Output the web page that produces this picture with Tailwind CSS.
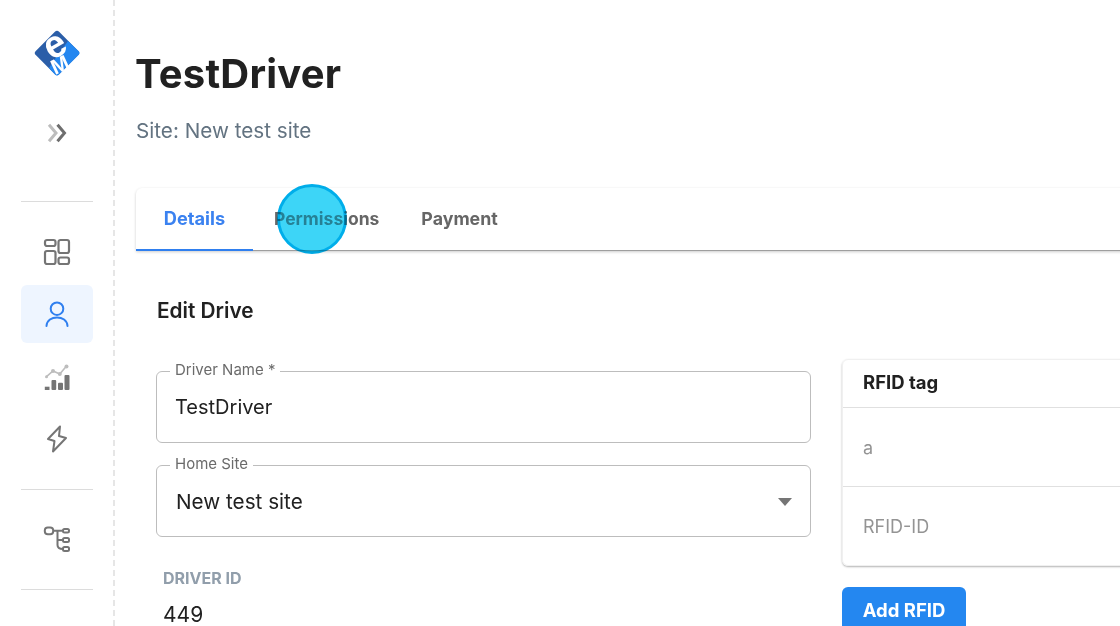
<!DOCTYPE html>
<html lang="en">
<head>
    <meta charset="utf-8">
    <title>TestDriver</title>
    <script src="https://cdn.jsdelivr.net/npm/@tailwindcss/browser@4"></script>
</head>
<body class="bg-white font-['Inter',sans-serif] text-[#212121] overflow-hidden">
<div class="relative flex w-[1120px] h-[626px] overflow-hidden">

    <!-- sidebar -->
    <aside class="w-[115px] h-full shrink-0 border-r-2 border-dashed border-[#e6e6e6] flex flex-col items-center">
        <svg class="mt-[30px] w-[46px] h-[46px] overflow-visible" viewBox="0 0 46 46">
            <rect x="6.500" y="6.500" width="33" height="33" rx="3" transform="rotate(45 23 23)" fill="#2b5ea8"/>
            <path d="M34 11 L44.500 21 Q46.500 23 44.500 25 L25 44.500 Q23 46.500 21 44.500 L15 38 L23 26Z" fill="#2487f0"/>
            <text x="10.500" y="27" transform="rotate(-30 21 16)" font-family="'Liberation Sans',sans-serif" font-size="38" font-weight="700" fill="#fff">e</text>
            <text x="17" y="41.500" transform="rotate(-25 27 34)" font-family="'Liberation Sans',sans-serif" font-size="21" font-weight="700" fill="#fff">M</text>
        </svg>
        <svg class="mt-[45px] w-[24px] h-[24px]" viewBox="0 0 24 24" fill="none" stroke-width="3">
            <path d="M4 3.800 L11 12 L4 20.200" stroke="#bdbdbd"/>
            <path d="M12.500 3.800 L19.500 12 L12.500 20.200" stroke="#6e6e6e"/>
        </svg>
        <div class="mt-[56px] w-[72px] border-t border-[#dcdcdc]"></div>
        <svg class="mt-[36px] w-[28px] h-[28px]" viewBox="0 0 28 28" fill="none" stroke="#757575" stroke-width="2.200">
            <rect x="2" y="2" width="10.500" height="6" rx="2"/>
            <rect x="2" y="13" width="10.500" height="13" rx="2"/>
            <rect x="15.500" y="2" width="10.500" height="13" rx="2"/>
            <rect x="15.500" y="19.500" width="10.500" height="6.500" rx="2"/>
        </svg>
        <div class="mt-[19px] w-[72px] h-[58px] rounded-md bg-[#eef5ff] flex items-center justify-center">
            <svg class="w-[26px] h-[28px]" viewBox="0 0 26 28" fill="none" stroke="#2f7fef" stroke-width="2" stroke-linecap="round">
                <circle cx="13" cy="8.700" r="6.300"/>
                <path d="M2.500 26 C3 14.500 23 14.500 23.500 26"/>
            </svg>
        </div>
        <svg class="mt-[21px] w-[28px] h-[28px]" viewBox="0 0 28 28" fill="none">
            <path d="M3.500 12.700 L10 7 L16.800 10 L23.500 2" stroke="#bdbdbd" stroke-width="1.600"/>
            <circle cx="3.500" cy="12.700" r="1.500" fill="#bdbdbd"/><circle cx="10" cy="7" r="2" fill="#bdbdbd"/><circle cx="16.800" cy="10" r="2" fill="#bdbdbd"/><circle cx="23.500" cy="2.500" r="2" fill="#bdbdbd"/>
            <rect x="1.800" y="22.700" width="4.700" height="3.300" fill="#757575"/>
            <rect x="8.500" y="16" width="4.700" height="10" rx="1" fill="#757575"/>
            <rect x="15" y="18.700" width="5" height="7.300" rx="1" fill="#757575"/>
            <rect x="21.500" y="11" width="5" height="15" rx="1" fill="#757575"/>
        </svg>
        <svg class="mt-[33px] w-[22px] h-[28px]" viewBox="0 0 22 28" fill="none" stroke="#757575" stroke-width="2" stroke-linejoin="round">
            <path d="M14 1.500 L2 14 L8.500 16 L7 26.500 L20 13 L13 11 Z"/>
        </svg>
        <div class="mt-[36px] w-[72px] border-t border-[#dcdcdc]"></div>
        <svg class="mt-[35px] w-[28px] h-[28px]" viewBox="0 0 28 28" fill="none" stroke="#757575" stroke-width="2">
            <rect x="1.800" y="2.600" width="8.400" height="6.600" rx="3"/>
            <rect x="20" y="4" width="6" height="3.500" rx="1.500"/>
            <rect x="20" y="13" width="6" height="4" rx="1.500"/>
            <rect x="20" y="22" width="6" height="4" rx="1.500"/>
            <path d="M10.500 5.800 H20 M14.500 5.800 V20 Q14.500 24 20 24 M14.500 15 H20"/>
        </svg>
        <div class="mt-[36px] w-[72px] border-t border-[#dcdcdc]"></div>
    </aside>

    <!-- main -->
    <main class="flex-1 min-w-0 pl-[20px]">
        <h1 class="mt-[49px] text-[40px] leading-[50px] font-bold tracking-[0.2px] text-[#212121]">TestDriver</h1>
        <p class="mt-[17px] ml-[1px] text-[20.700px] leading-[30px] text-[#637381]">Site: New test site</p>

        <div class="mt-[42px] ml-[1px] h-[63px] w-[1100px] flex rounded-tl-md border-b border-[#9e9e9e] shadow-[0_1px_3px_rgba(0,0,0,0.2)]">
            <div class="w-[117px] h-[63px] pt-[1px] border-b-2 border-[#2f7fef] flex items-center justify-center text-[18.200px] font-bold text-[#3b82f0]">Details</div>
            <div class="ml-[21px] h-[62px] pt-[1px] flex items-center text-[17.500px] font-bold text-[#666]">Permissions</div>
            <div class="ml-[42px] h-[62px] pt-[1px] flex items-center text-[17.800px] font-bold text-[#666]">Payment</div>
        </div>

        <h2 class="mt-[45px] ml-[22px] text-[20.800px] leading-[30px] font-semibold text-[#212121]">Edit Drive</h2>

        <div class="mt-[45px] ml-[21px] flex gap-[31px] items-start">
            <div class="w-[655px] shrink-0">
                <fieldset class="h-[80px] border border-[#bdbdbd] rounded-md pl-[13px] -mt-[8px]">
                    <legend class="px-[5px] text-[15px] leading-[16px] text-[#6b6b6b] -translate-y-px">Driver Name *</legend>
                    <div class="pl-[5px] mt-[13px] text-[20px] leading-[30px] text-[#212121]">TestDriver</div>
                </fieldset>
                <fieldset class="mt-[14px] h-[80px] border border-[#bdbdbd] rounded-md pl-[13px] relative">
                    <legend class="px-[5px] text-[15px] leading-[16px] text-[#6b6b6b] -translate-y-px">Home Site</legend>
                    <div class="flex items-center justify-between pl-[6px] pr-[18px] mt-[14px] text-[20.700px] leading-[30px] text-[#212121]">
                        <span>New test site</span>
                        <svg class="w-[14px] h-[8px]" viewBox="0 0 14 8"><path d="M0 0 H14 L7 8 Z" fill="#757575"/></svg>
                    </div>
                </fieldset>
                <div class="mt-[31px] ml-[7px] text-[16px] leading-[20px] font-bold text-[#919eab]">DRIVER ID</div>
                <div class="mt-[17px] ml-[7px] text-[21px] leading-[20px] text-[#212121]">449</div>
            </div>

            <div class="w-[300px] shrink-0 -mt-[12px]">
                <div class="rounded-md border border-[#f0f0f0] shadow-[0_1px_2px_rgba(0,0,0,0.3)]">
                    <div class="h-[48px] pl-[20px] pb-[1px] flex items-center text-[18.500px] font-bold text-[#212121] border-b border-[#e0e0e0]">RFID tag</div>
                    <div class="h-[79px] pl-[20px] flex items-center text-[18px] text-[#949494] border-b border-[#e0e0e0]">a</div>
                    <div class="h-[78px] pl-[20px] flex items-center text-[18px] text-[#949494]">RFID-ID</div>
                </div>
                <button class="mt-[21px] w-[124px] h-[48px] rounded-md bg-[#2487f0] text-white text-[18.500px] font-bold">Add RFID</button>
            </div>
        </div>
    </main>

    <!-- click marker over the tab -->
    <div class="absolute left-[277px] top-[184px] w-[70px] h-[70px] rounded-full bg-white/35">
        <div class="w-full h-full rounded-full bg-[#3dd5f7] border-[3px] border-[#00aeea] mix-blend-multiply"></div>
    </div>
</div>
</body>
</html>
